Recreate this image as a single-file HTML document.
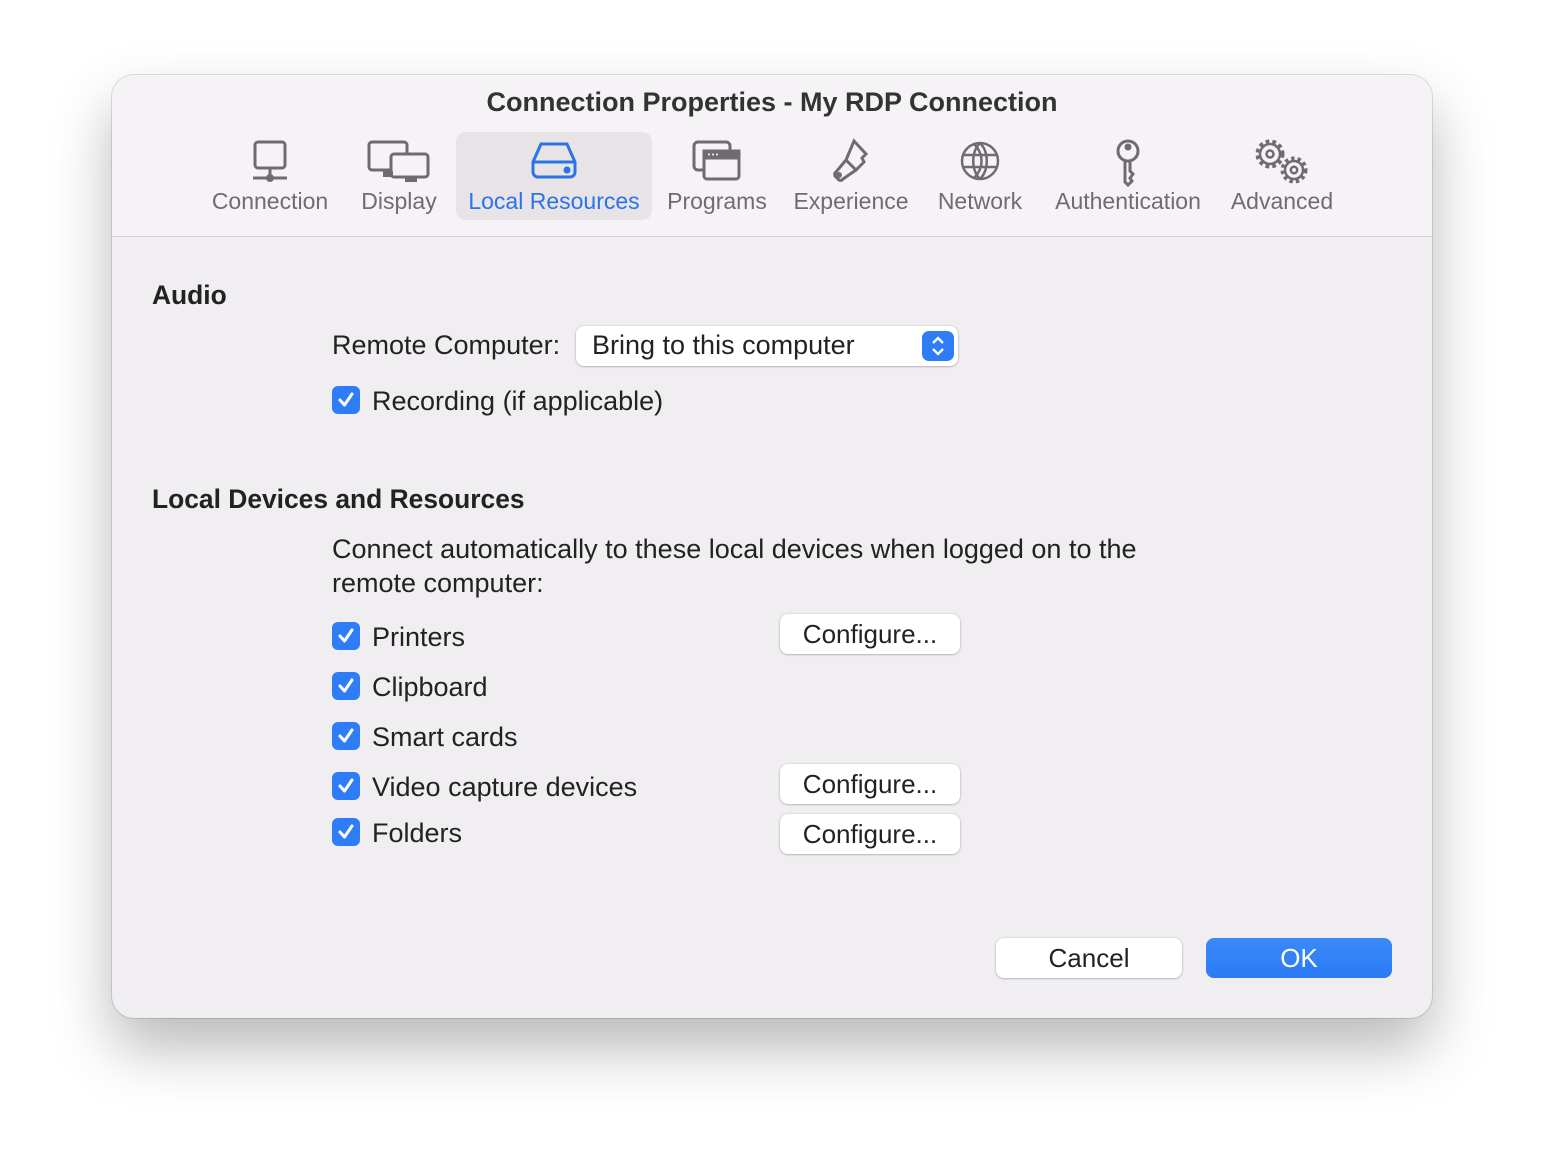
<!DOCTYPE html>
<html><head><meta charset="utf-8"><style>
body{margin:0;width:1544px;height:1166px;background:#fff;font-family:"Liberation Sans",sans-serif;position:relative;overflow:hidden}
.win{position:absolute;left:112px;top:75px;width:1320px;height:943px;border-radius:22px;background:#f0eef1;box-shadow:0 30px 60px rgba(0,0,0,.28),0 0 0 1px rgba(0,0,0,.12);overflow:hidden}
.hdr{position:absolute;left:0;top:0;width:1320px;height:161px;background:#f6f3f6;border-bottom:1px solid #d6d3d6}
.title{position:absolute;top:12px;width:100%;text-align:center;font-weight:bold;font-size:27px;color:#333}
.tab{position:absolute;top:57px;height:88px;text-align:center;font-size:23px;color:#6f6c6f}
.tab svg{display:block;margin:6px auto 0}
.tab span{position:absolute;left:-20px;right:-20px;top:56px;white-space:nowrap}
.sel{background:#e7e3e7;border-radius:10px;color:#2a74e6}
.t{position:absolute;font-size:27px;color:#222;white-space:nowrap}
.h{position:absolute;font-size:26.4px;font-weight:bold;color:#222}
.cb{position:absolute;width:28px;height:28px;border-radius:6px;background:#2f7df6}
.cb svg{position:absolute;left:4px;top:4px}
.btn{position:absolute;background:#fff;border-radius:8px;box-shadow:0 0.5px 2px rgba(0,0,0,.35);font-size:26px;color:#222;text-align:center}
</style></head><body>
<div class="win">
<div class="hdr">
<div class="title">Connection Properties - My RDP Connection</div>
<div class="tab" style="left:88px;width:140px"><svg width="40" height="46" viewBox="0 0 40 46" fill="none" stroke="#6f6c6f" stroke-width="3"><rect x="5" y="4" width="30" height="26" rx="3"/><line x1="20" y1="30" x2="20" y2="40"/><line x1="3" y1="40" x2="37" y2="40"/><circle cx="20" cy="40" r="2.5" fill="#6f6c6f"/></svg><span>Connection</span></div>
<div class="tab" style="left:242px;width:90px"><svg width="66" height="46" viewBox="0 0 66 46" fill="none" stroke="#6f6c6f" stroke-width="3"><rect x="3" y="4" width="38" height="28" rx="3"/><rect x="25" y="16" width="37" height="23" rx="3" fill="#f6f3f6"/><rect x="17" y="33" width="10" height="6" fill="#6f6c6f" stroke="none"/><rect x="39" y="40" width="12" height="4" fill="#6f6c6f" stroke="none"/></svg><span>Display</span></div>
<div class="tab sel" style="left:344px;width:196px"><svg width="50" height="46" viewBox="0 0 50 46" fill="none" stroke="#2a74e6" stroke-width="3"><path d="M12 6 H38 L46 24 V34 a5 5 0 0 1 -5 5 H9 a5 5 0 0 1 -5 -5 V24 Z"/><path d="M4 24 H46"/><circle cx="38" cy="32" r="2" fill="#2a74e6"/></svg><span>Local Resources</span></div>
<div class="tab" style="left:552px;width:106px"><svg width="50" height="46" viewBox="0 0 50 46" fill="none" stroke="#6f6c6f" stroke-width="3"><rect x="2" y="4" width="36" height="28" rx="4"/><rect x="12" y="13" width="35" height="28" rx="3" fill="#f6f3f6"/><rect x="12" y="13" width="35" height="7" fill="#6f6c6f"/><circle cx="17" cy="16.5" r="1" fill="#fff" stroke="none"/><circle cx="21" cy="16.5" r="1" fill="#fff" stroke="none"/><circle cx="25" cy="16.5" r="1" fill="#fff" stroke="none"/></svg><span>Programs</span></div>
<div class="tab" style="left:676px;width:126px"><svg width="46" height="48" viewBox="0 0 46 48" fill="none" stroke="#6f6c6f" stroke-width="3"><path d="M26 3 L38 16 L34 20 L36 24 L28 32 L18 22 Z"/><path d="M18 22 L8 34 a3 3 0 0 0 0 5 l2 2 a3 3 0 0 0 5 0 L28 32"/><circle cx="11" cy="37" r="1.5"/></svg><span>Experience</span></div>
<div class="tab" style="left:818px;width:100px"><svg width="46" height="46" viewBox="0 0 46 46" fill="none" stroke="#6f6c6f" stroke-width="2.5"><circle cx="23" cy="23" r="18"/><path d="M23 5 C14 14 14 32 23 41 M23 5 C32 14 32 32 23 41 M6 17 H40 M6 29 H40 M17 6 C27 16 27 30 17 40"/></svg><span>Network</span></div>
<div class="tab" style="left:934px;width:164px"><svg width="30" height="50" viewBox="0 0 30 50" fill="none" stroke="#6f6c6f" stroke-width="3"><circle cx="15" cy="13" r="10"/><circle cx="15" cy="9" r="2" fill="#6f6c6f"/><path d="M12 22 V44 L15 47 L19 43 L17 40 L20 36 L17 33 V22"/></svg><span>Authentication</span></div>
<div class="tab" style="left:1114px;width:112px"><svg width="56" height="48" viewBox="0 0 56 48" fill="none" stroke="#6f6c6f"><circle cx="16" cy="16" r="12" stroke-width="5" stroke-dasharray="3.5 3"/><circle cx="16" cy="16" r="10" stroke-width="2.5" fill="#f6f3f6"/><circle cx="16" cy="16" r="3.5" stroke-width="2.5"/><circle cx="40" cy="32" r="11" stroke-width="5" stroke-dasharray="3.2 2.9"/><circle cx="40" cy="32" r="9" stroke-width="2.5" fill="#f6f3f6"/><circle cx="40" cy="32" r="3.2" stroke-width="2.5"/></svg><span>Advanced</span></div>
</div>
<div class="h" style="left:40px;top:205px">Audio</div>
<div class="t" style="left:220px;top:255px">Remote Computer:</div>
<div class="btn" style="left:464px;top:251px;width:382px;height:40px;text-align:left;font-size:27px"><span style="position:absolute;left:16px;top:4px">Bring to this computer</span><div style="position:absolute;right:4px;top:5px;width:32px;height:30px;border-radius:7px;background:#2f7df6"><svg width="32" height="30" viewBox="0 0 32 30" fill="none" stroke="#fff" stroke-width="2.3"><path d="M11 12 L16 7 L21 12 M11 18 L16 23 L21 18"/></svg></div></div>
<div class="cb" style="left:220px;top:311px"><svg width="20" height="20" viewBox="0 0 20 20" fill="none" stroke="#fff" stroke-width="3" stroke-linecap="round" stroke-linejoin="round"><path d="M4 10 L8.5 15 L16 4"/></svg></div>
<div class="t" style="left:260px;top:311px">Recording (if applicable)</div>
<div class="h" style="left:40px;top:409px">Local Devices and Resources</div>
<div class="t" style="left:220px;top:457px;line-height:34px">Connect automatically to these local devices when logged on to the<br>remote computer:</div>
<div class="cb" style="left:220px;top:547px"><svg width="20" height="20" viewBox="0 0 20 20" fill="none" stroke="#fff" stroke-width="3" stroke-linecap="round" stroke-linejoin="round"><path d="M4 10 L8.5 15 L16 4"/></svg></div>
<div class="t" style="left:260px;top:547px">Printers</div>
<div class="cb" style="left:220px;top:597px"><svg width="20" height="20" viewBox="0 0 20 20" fill="none" stroke="#fff" stroke-width="3" stroke-linecap="round" stroke-linejoin="round"><path d="M4 10 L8.5 15 L16 4"/></svg></div>
<div class="t" style="left:260px;top:597px">Clipboard</div>
<div class="cb" style="left:220px;top:647px"><svg width="20" height="20" viewBox="0 0 20 20" fill="none" stroke="#fff" stroke-width="3" stroke-linecap="round" stroke-linejoin="round"><path d="M4 10 L8.5 15 L16 4"/></svg></div>
<div class="t" style="left:260px;top:647px">Smart cards</div>
<div class="cb" style="left:220px;top:697px"><svg width="20" height="20" viewBox="0 0 20 20" fill="none" stroke="#fff" stroke-width="3" stroke-linecap="round" stroke-linejoin="round"><path d="M4 10 L8.5 15 L16 4"/></svg></div>
<div class="t" style="left:260px;top:697px">Video capture devices</div>
<div class="cb" style="left:220px;top:743px"><svg width="20" height="20" viewBox="0 0 20 20" fill="none" stroke="#fff" stroke-width="3" stroke-linecap="round" stroke-linejoin="round"><path d="M4 10 L8.5 15 L16 4"/></svg></div>
<div class="t" style="left:260px;top:743px">Folders</div>
<div class="btn" style="left:668px;top:539px;width:180px;height:40px;line-height:40px">Configure...</div>
<div class="btn" style="left:668px;top:689px;width:180px;height:40px;line-height:40px">Configure...</div>
<div class="btn" style="left:668px;top:739px;width:180px;height:40px;line-height:40px">Configure...</div>
<div class="btn" style="left:884px;top:863px;width:186px;height:40px;line-height:40px">Cancel</div>
<div class="btn" style="left:1094px;top:863px;width:186px;height:40px;line-height:40px;background:linear-gradient(#3a8af8,#2c7af5);color:#fff;box-shadow:none">OK</div>
</div>
</body></html>
